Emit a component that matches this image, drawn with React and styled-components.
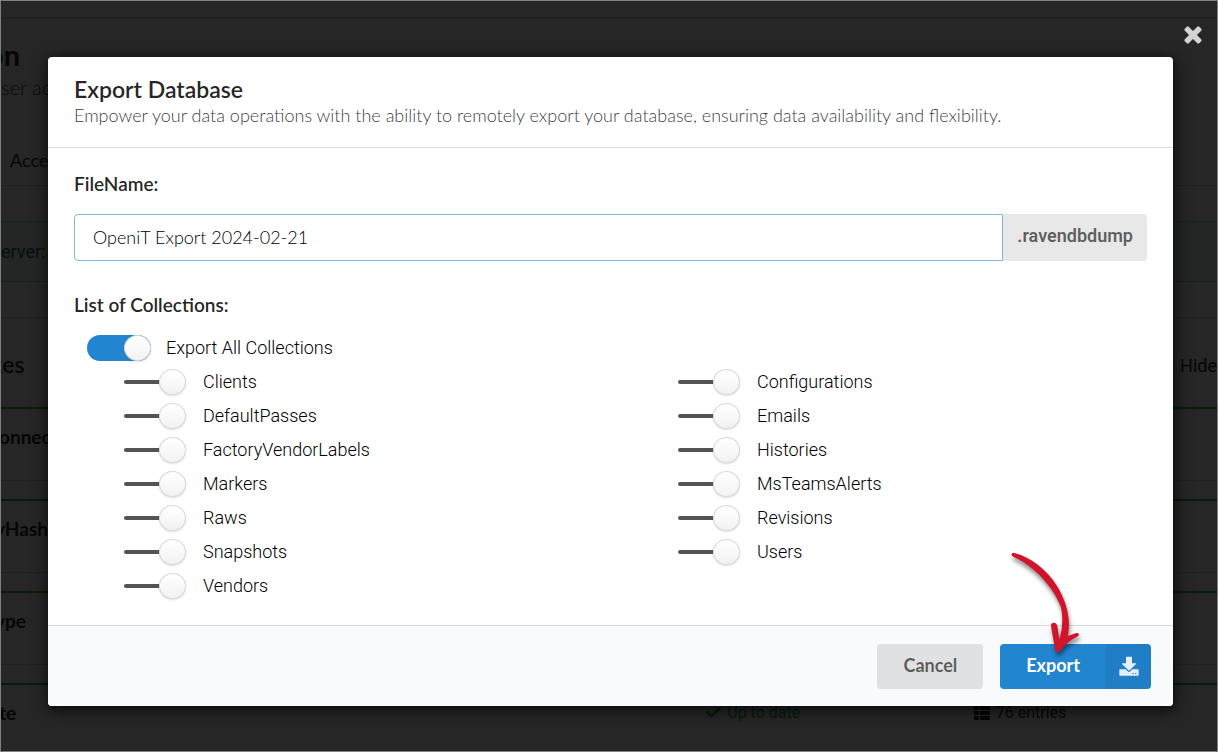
import React, { useState } from 'react';
import styled, { createGlobalStyle } from 'styled-components';
import { FaCheck, FaThList } from 'react-icons/fa';

const GlobalStyle = createGlobalStyle`
  *,
  *::before,
  *::after {
    box-sizing: border-box;
  }

  body {
    margin: 0;
    background: #ffffff;
    color: rgba(0, 0, 0, 0.87);
    font-family: Lato, 'Liberation Sans', sans-serif;
    font-size: 18px;
  }
`;

const Frame = styled.div`
  position: relative;
  height: 100vh;
  overflow: hidden;
  border: 1px solid #808080;
`;

const NavBar = styled.div`
  height: 17px;
  border-bottom: 1px solid #d4d4d5;
  box-shadow: 0 1px 2px rgba(34, 36, 38, 0.15);
`;

const PageHeader = styled.header`
  height: 113px;
  padding-top: 19px;
`;

const PageTitle = styled.h1`
  margin: 0;
  font-size: 29px;
  line-height: 36px;
  font-weight: 700;
  text-indent: -14px;
`;

const PageSubtitle = styled.p`
  margin: 0;
  font-size: 20px;
  line-height: 28px;
  font-weight: 300;
  color: rgba(0, 0, 0, 0.8);
`;

const TabBar = styled.nav`
  display: flex;
  align-items: center;
  height: 55px;
  padding: 4px 9px 0;
  border-bottom: 1px solid #d4d4d5;
`;

const Notice = styled.div`
  display: flex;
  align-items: center;
  height: 61px;
  margin: 35px 0;
  border: solid #a9d5de;
  border-width: 1px 0;
  background: #f0f9f9;
  color: #276f86;
  font-family: Roboto, sans-serif;
  font-weight: 400;
`;

const SectionBar = styled.div`
  display: flex;
  align-items: center;
  justify-content: space-between;
  height: 90px;
  padding-top: 6px;
  border-top: 1px solid #d4d4d5;
`;

const SectionTitle = styled.h2`
  margin: 0;
  padding-bottom: 3px;
  font-size: 23px;
  font-weight: 600;
  text-indent: -10px;
`;

const HideLabel = styled.span`
  font-family: Roboto, sans-serif;
  font-weight: 400;
`;

const IndexCard = styled.section`
  display: grid;
  grid-template-columns: 58% 22% 1fr;
  align-items: center;
  height: 74px;
  margin-bottom: 18px;
  padding-bottom: 16px;
  border-top: 2px solid #21ba45;
  border-bottom: 1px solid #d4d4d5;
`;

const IndexName = styled.h3`
  margin: 0;
  font-size: 19px;
  font-weight: 700;
  text-indent: ${props => (props.$cropped ? '-6px' : '-2px')};
`;

const IndexFact = styled.span`
  display: flex;
  align-items: center;
  gap: 6px;
  font-family: Roboto, sans-serif;
  font-size: 16px;
  font-weight: 400;
  color: ${props => (props.$good ? '#21ba45' : 'inherit')};
`;

const Dimmer = styled.div`
  position: absolute;
  inset: 0;
  padding: 56px 44px 45px 47px;
  background: rgba(0, 0, 0, 0.85);
`;

const CloseButton = styled.button`
  position: absolute;
  top: 20px;
  right: 11px;
  display: flex;
  padding: 0;
  border: none;
  background: none;
  color: #d4d4d4;
  cursor: pointer;
`;

const Modal = styled.div`
  border-radius: 4px;
  background: #ffffff;
  box-shadow: 1px 3px 3px rgba(0, 0, 0, 0.2), 1px 3px 15px 2px rgba(0, 0, 0, 0.6);
`;

const ModalHeader = styled.div`
  padding: 18px 26px 20px;
  border-bottom: 1px solid #dedfdf;
`;

const ModalTitle = styled.h2`
  margin: 0;
  font-size: 23px;
  line-height: 28px;
  font-weight: 600;
`;

const ModalSubtitle = styled.p`
  margin: 0;
  line-height: 24px;
  font-weight: 300;
  color: rgba(0, 0, 0, 0.8);
`;

const ModalBody = styled.div`
  padding: 25px 26px 22px;
`;

const FieldLabel = styled.label`
  display: block;
  margin-bottom: 19px;
  font-size: 19px;
  line-height: 22px;
  font-weight: 600;
`;

const FileNameRow = styled.div`
  display: flex;
  height: 47px;
  margin-bottom: 33px;
`;

const FileNameInput = styled.input`
  flex: 1;
  min-width: 0;
  padding: 0 18px 2px;
  border: 1px solid #85b7d9;
  border-radius: 4px 0 0 4px;
  outline: none;
  background: #ffffff;
  color: #000000;
  font-family: inherit;
  font-size: 18px;
  font-weight: 300;
`;

const Extension = styled.span`
  padding: 0 14px;
  border-radius: 0 4px 4px 0;
  background: #e8e8e8;
  color: rgba(0, 0, 0, 0.6);
  font-family: Roboto, sans-serif;
  font-size: 18px;
  line-height: 44px;
  font-weight: 600;
`;

const CollectionSet = styled.fieldset`
  min-width: 0;
  margin: 0;
  padding: 0;
  border: none;
`;

const CollectionLegend = styled.legend`
  margin-bottom: 15px;
  padding: 0;
  font-size: 19px;
  line-height: 22px;
  font-weight: 600;
`;

const AllRow = styled.div`
  padding-left: 13px;
`;

const CollectionGrid = styled.div`
  display: grid;
  grid-template-columns: 1fr 1fr;
  column-gap: 85px;
  padding-left: 50px;
`;

const ToggleLabel = styled.label`
  display: flex;
  align-items: center;
  gap: 15px;
  height: 34px;
  color: #000000;
  font-family: Roboto, sans-serif;
  font-size: 18px;
  font-weight: 300;
  cursor: pointer;
`;

const ToggleText = styled.span`
  padding-bottom: 1px;
`;

const ToggleInput = styled.input`
  appearance: none;
  position: relative;
  flex: none;
  width: 64px;
  height: 26px;
  margin: 0;
  cursor: pointer;

  &::before {
    content: '';
    position: absolute;
    top: 11px;
    left: 0;
    width: 50px;
    height: 4px;
    border-radius: 2px;
    background: #545454;
  }

  &::after {
    content: '';
    position: absolute;
    top: 0;
    left: 35px;
    width: 27px;
    height: 26px;
    border: 1px solid #d8d9d9;
    border-radius: 50%;
    background: #ffffff linear-gradient(transparent, rgba(0, 0, 0, 0.05));
    box-shadow: 0 1px 2px rgba(34, 36, 38, 0.15);
  }

  &:checked::before {
    top: 0;
    width: 64px;
    height: 26px;
    border-radius: 13px;
    background: #2185d0;
  }

  &:checked::after {
    left: 37px;
  }
`;

const ModalActions = styled.div`
  display: flex;
  justify-content: flex-end;
  gap: 17px;
  padding: 18px 22px 17px;
  border-top: 1px solid #d7dadc;
  border-radius: 0 0 4px 4px;
  background: #f9fafb;
`;

const CancelButton = styled.button`
  height: 45px;
  padding: 0 26px 3px;
  border: none;
  border-radius: 4px;
  background: #e0e1e2;
  color: rgba(0, 0, 0, 0.6);
  font-family: inherit;
  font-size: 18px;
  font-weight: 700;
  cursor: pointer;
`;

const ExportWrap = styled.div`
  position: relative;
`;

const ExportButton = styled.button`
  display: flex;
  align-items: stretch;
  height: 45px;
  padding: 0;
  overflow: hidden;
  border: none;
  border-radius: 4px;
  background: #2185d0;
  color: #ffffff;
  font-family: inherit;
  font-size: 18px;
  font-weight: 700;
  cursor: pointer;
`;

const ExportText = styled.span`
  padding: 0 26px;
  line-height: 43px;
`;

const ExportIcon = styled.span`
  display: flex;
  align-items: center;
  justify-content: center;
  width: 45px;
  padding-bottom: 2px;
  background: rgba(0, 0, 0, 0.05);
`;

const Pointer = styled.svg`
  position: absolute;
  top: -94px;
  left: 7px;
  overflow: visible;
  pointer-events: none;
  filter: drop-shadow(1px 4px 2px rgba(0, 0, 0, 0.45));
`;

const COLLECTIONS = [
  'Clients',
  'Configurations',
  'DefaultPasses',
  'Emails',
  'FactoryVendorLabels',
  'Histories',
  'Markers',
  'MsTeamsAlerts',
  'Raws',
  'Revisions',
  'Snapshots',
  'Users',
  'Vendors'
];

const CloseIcon = () => (
  <svg width="26" height="26" viewBox="0 0 1792 1792" fill="currentColor" aria-hidden="true">
    <path d="M1490 1322q0 40-28 68l-136 136q-28 28-68 28t-68-28l-294-294-294 294q-28 28-68 28t-68-28l-136-136q-28-28-28-68t28-68l294-294-294-294q-28-28-28-68t28-68l136-136q28-28 68-28t68 28l294 294 294-294q28-28 68-28t68 28l136 136q28 28 28 68t-28 68l-294 294 294 294q28 28 28 68z" />
  </svg>
);

const DownloadIcon = () => (
  <svg width="20" height="20" viewBox="0 0 60 60" fill="#ffffff" fillOpacity="0.88" aria-hidden="true">
    <path d="M23 2h14q2 0 2 2v18h11q2 0 1 2L32 43q-2 2-4 0L9 24q-1-2 1-2h11V4q0-2 2-2z" />
    <path
      fillRule="evenodd"
      d="M3 40h17l6 6q4 4 8 0l6-6h17q2 0 2 2v15q0 2-2 2H3q-2 0-2-2V42q0-2 2-2zm37 11v3h4v-3zm8 0v3h4v-3z"
    />
  </svg>
);

const App = () => {
  const [open, setOpen] = useState(true);
  const [exportAll, setExportAll] = useState(true);
  const [selected, setSelected] = useState([]);
  const [fileName, setFileName] = useState('OpeniT Export 2024-02-21');

  const toggleCollection = (name) => {
    setSelected(
      selected.includes(name)
        ? selected.filter(item => item !== name)
        : [...selected, name]
    );
  };

  const close = () => setOpen(false);

  return (
    <Frame>
      <GlobalStyle />
      <NavBar />
      <PageHeader>
        <PageTitle>on</PageTitle>
        <PageSubtitle>ser ac</PageSubtitle>
      </PageHeader>
      <TabBar>Acce</TabBar>
      <Notice>erver: h</Notice>
      <SectionBar>
        <SectionTitle>xes</SectionTitle>
        <HideLabel>Hide</HideLabel>
      </SectionBar>
      <IndexCard>
        <IndexName>onnec</IndexName>
      </IndexCard>
      <IndexCard>
        <IndexName $cropped>yHash</IndexName>
      </IndexCard>
      <IndexCard>
        <IndexName $cropped>ype</IndexName>
      </IndexCard>
      <IndexCard>
        <IndexName>te</IndexName>
        <IndexFact $good>
          <FaCheck size={15} />
          Up to date
        </IndexFact>
        <IndexFact>
          <FaThList size={16} />
          76 entries
        </IndexFact>
      </IndexCard>

      {open && (
        <Dimmer>
          <CloseButton type="button" aria-label="Close" onClick={close}>
            <CloseIcon />
          </CloseButton>
          <Modal role="dialog" aria-labelledby="export-title">
            <ModalHeader>
              <ModalTitle id="export-title">Export Database</ModalTitle>
              <ModalSubtitle>
                Empower your data operations with the ability to remotely export your database, ensuring data availability and flexibility.
              </ModalSubtitle>
            </ModalHeader>

            <ModalBody>
              <FieldLabel htmlFor="file-name">FileName:</FieldLabel>
              <FileNameRow>
                <FileNameInput
                  id="file-name"
                  type="text"
                  value={fileName}
                  onChange={e => setFileName(e.target.value)}
                />
                <Extension>.ravendbdump</Extension>
              </FileNameRow>

              <CollectionSet>
                <CollectionLegend>List of Collections:</CollectionLegend>
                <AllRow>
                  <ToggleLabel>
                    <ToggleInput
                      type="checkbox"
                      checked={exportAll}
                      onChange={() => setExportAll(!exportAll)}
                    />
                    <ToggleText>Export All Collections</ToggleText>
                  </ToggleLabel>
                </AllRow>
                <CollectionGrid>
                  {COLLECTIONS.map(name => (
                    <ToggleLabel key={name}>
                      <ToggleInput
                        type="checkbox"
                        checked={selected.includes(name)}
                        onChange={() => toggleCollection(name)}
                      />
                      <ToggleText>{name}</ToggleText>
                    </ToggleLabel>
                  ))}
                </CollectionGrid>
              </CollectionSet>
            </ModalBody>

            <ModalActions>
              <CancelButton type="button" onClick={close}>Cancel</CancelButton>
              <ExportWrap>
                <ExportButton type="button">
                  <ExportText>Export</ExportText>
                  <ExportIcon>
                    <DownloadIcon />
                  </ExportIcon>
                </ExportButton>
                <Pointer width="77" height="108" viewBox="80 60 231 324" aria-hidden="true">
                  <path
                    fill="#cf142b"
                    d="M95 70q4-3 10 0C195 95 263 190 266 280q0 18-3 38l22-8q9-3 11 3 0 6-8 9-30 15-46 38-6 9-13 5-4-2-5-9L212 288q-1-9 8-10 9 0 11 10l6 40q15-48 5-96C222 175 165 110 99 80q-8-3-4-10z"
                  />
                </Pointer>
              </ExportWrap>
            </ModalActions>
          </Modal>
        </Dimmer>
      )}
    </Frame>
  );
};

export default App;
